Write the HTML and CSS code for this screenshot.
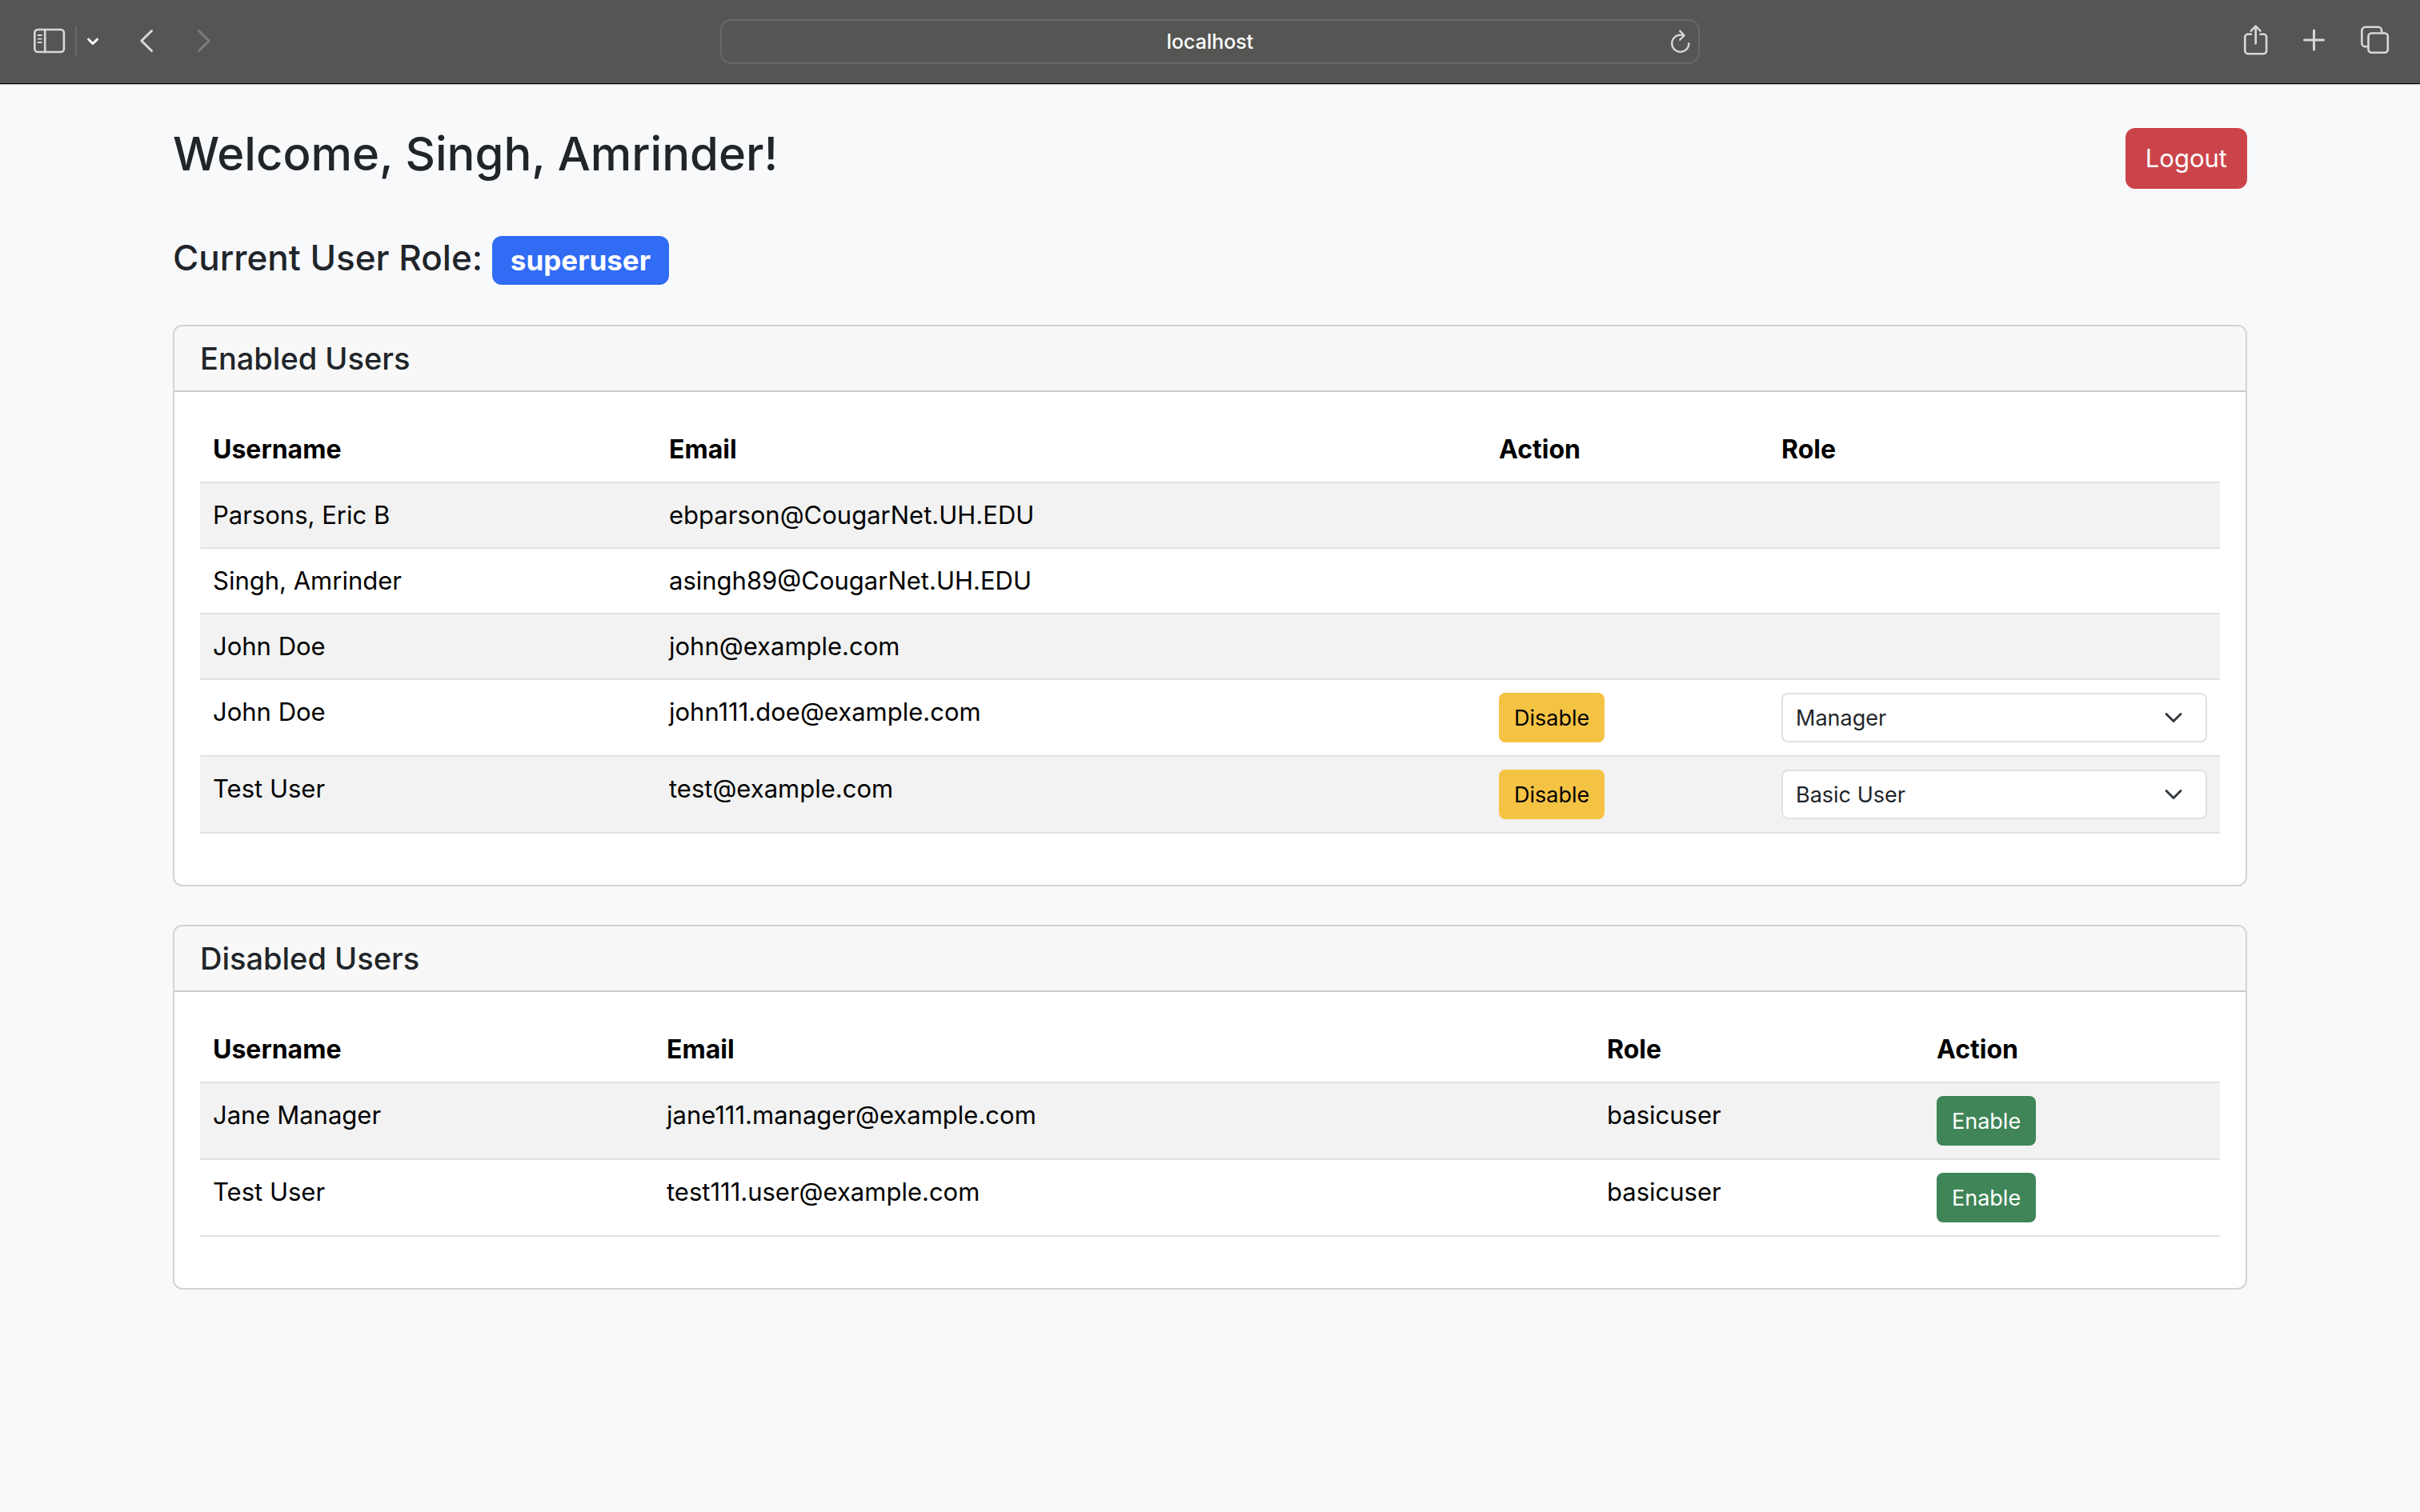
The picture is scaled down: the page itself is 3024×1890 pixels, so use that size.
FILE: index.html
```html
<!DOCTYPE html>
<html lang="en">
<head>
  <meta charset="utf-8">
  <meta name="viewport" content="width=device-width, initial-scale=1">
  <title>User Management</title>
  <link rel="stylesheet" href="styles.css">
</head>
<body>
  <header class="toolbar">
    <div class="toolbar-left">
      <button class="tool" type="button" aria-label="Show sidebar">
        <svg width="40" height="32" viewBox="0 0 40 32" fill="none" stroke="currentColor" stroke-width="2.6" stroke-linecap="round">
          <rect x="1.3" y="2" width="36.6" height="28" rx="4"/>
          <path d="M14.2 2v28"/>
          <path d="M5.6 9h4.2M5.6 13.6h4.2M5.6 18h4.2" stroke-width="1.8"/>
        </svg>
      </button>
      <span class="tool-divider"></span>
      <button class="tool tool-bright" type="button" aria-label="Tab groups">
        <svg width="16" height="32" viewBox="0 0 16 32" fill="none" stroke="currentColor" stroke-width="3" stroke-linecap="round" stroke-linejoin="round">
          <path d="M2.6 14.2l5.4 5.3 5.4-5.3"/>
        </svg>
      </button>
      <div class="tool-nav">
        <button class="tool" type="button" aria-label="Back">
          <svg width="18" height="32" viewBox="0 0 18 32" fill="none" stroke="currentColor" stroke-width="3" stroke-linecap="round" stroke-linejoin="round">
            <path d="M15.5 3.5L2.8 16l12.7 12.5"/>
          </svg>
        </button>
        <button class="tool tool-dim" type="button" aria-label="Forward">
          <svg width="18" height="32" viewBox="0 0 18 32" fill="none" stroke="currentColor" stroke-width="3" stroke-linecap="round" stroke-linejoin="round">
            <path d="M2.5 3.5L15.2 16 2.5 28.5"/>
          </svg>
        </button>
      </div>
    </div>
    <div class="address">
      <input class="address-input" type="text" value="localhost" aria-label="Address">
      <button class="tool address-reload" type="button" aria-label="Reload">
        <svg width="28" height="32" viewBox="0 0 28 32" fill="none" stroke="currentColor" stroke-width="2.3" stroke-linecap="round" stroke-linejoin="round">
          <path d="M24.4 18.2A10.6 10.6 0 1 1 13.8 7.6c1.6 0 3 .2 4.2.6"/>
          <path d="M13.2 2.6l5.4 5.6-5.4 5.6"/>
        </svg>
      </button>
    </div>
    <div class="toolbar-right">
      <button class="tool" type="button" aria-label="Share">
        <svg width="30" height="38" viewBox="0 0 30 38" fill="none" stroke="currentColor" stroke-width="2.6" stroke-linecap="round" stroke-linejoin="round">
          <path d="M10 11.8H4.8a3.5 3.5 0 0 0-3.5 3.5v17.4a3.5 3.5 0 0 0 3.5 3.5h19.8a3.5 3.5 0 0 0 3.5-3.5V15.3a3.5 3.5 0 0 0-3.5-3.5H19.4" stroke-linecap="butt"/>
          <path d="M14.7 23.5V2M8.8 7.6l5.9-5.9 5.9 5.9"/>
        </svg>
      </button>
      <button class="tool" type="button" aria-label="New tab">
        <svg width="28" height="32" viewBox="0 0 28 32" fill="none" stroke="currentColor" stroke-width="3" stroke-linecap="round">
          <path d="M13.5 4v24M1.5 16h24"/>
        </svg>
      </button>
      <button class="tool" type="button" aria-label="Show tabs">
        <svg width="36" height="36" viewBox="0 0 36 36" fill="none" stroke="currentColor" stroke-width="2.6">
          <rect x="9.5" y="9.5" width="24.3" height="24.3" rx="4"/>
          <path d="M9.5 26.3H5.8a4.5 4.5 0 0 1-4.5-4.5V6.3a4.5 4.5 0 0 1 4.5-4.5h15.8a4.5 4.5 0 0 1 4.5 4.5v3.2"/>
        </svg>
      </button>
    </div>
  </header>

  <main class="container">
    <div class="page-head">
      <h1 class="page-title">Welcome, Singh, Amrinder!</h1>
      <button class="btn btn-danger" type="button">Logout</button>
    </div>
    <h2 class="role-line">Current User Role: <span class="badge">superuser</span></h2>

    <section class="card">
      <h3 class="card-header">Enabled Users</h3>
      <div class="card-body">
        <table class="table">
          <colgroup>
            <col class="col-name">
            <col class="col-email">
            <col class="col-action">
            <col class="col-select">
          </colgroup>
          <thead>
            <tr><th scope="col">Username</th><th scope="col">Email</th><th scope="col">Action</th><th scope="col">Role</th></tr>
          </thead>
          <tbody>
            <tr><td>Parsons, Eric B</td><td>ebparson@CougarNet.UH.EDU</td><td></td><td></td></tr>
            <tr><td>Singh, Amrinder</td><td>asingh89@CougarNet.UH.EDU</td><td></td><td></td></tr>
            <tr><td>John Doe</td><td>john@example.com</td><td></td><td></td></tr>
            <tr>
              <td>John Doe</td>
              <td>john111.doe@example.com</td>
              <td><button class="btn btn-sm btn-warning" type="button">Disable</button></td>
              <td>
                <div class="select-wrap">
                  <select class="select" aria-label="Role for john111.doe@example.com">
                    <option selected>Manager</option>
                    <option>Basic User</option>
                  </select>
                  <svg class="select-arrow" width="32" height="24" viewBox="0 0 16 16" fill="none" stroke="currentColor" stroke-width="2" stroke-linecap="round" stroke-linejoin="round"><path d="m2 5 6 6 6-6"/></svg>
                </div>
              </td>
            </tr>
            <tr>
              <td>Test User</td>
              <td>test@example.com</td>
              <td><button class="btn btn-sm btn-warning" type="button">Disable</button></td>
              <td>
                <div class="select-wrap">
                  <select class="select" aria-label="Role for test@example.com">
                    <option>Manager</option>
                    <option selected>Basic User</option>
                  </select>
                  <svg class="select-arrow" width="32" height="24" viewBox="0 0 16 16" fill="none" stroke="currentColor" stroke-width="2" stroke-linecap="round" stroke-linejoin="round"><path d="m2 5 6 6 6-6"/></svg>
                </div>
              </td>
            </tr>
          </tbody>
        </table>
      </div>
    </section>

    <section class="card">
      <h3 class="card-header">Disabled Users</h3>
      <div class="card-body">
        <table class="table">
          <colgroup>
            <col class="col-name-narrow">
            <col class="col-email">
            <col class="col-role">
            <col class="col-enable">
          </colgroup>
          <thead>
            <tr><th scope="col">Username</th><th scope="col">Email</th><th scope="col">Role</th><th scope="col">Action</th></tr>
          </thead>
          <tbody>
            <tr>
              <td>Jane Manager</td>
              <td>jane111.manager@example.com</td>
              <td>basicuser</td>
              <td><button class="btn btn-sm btn-success" type="button">Enable</button></td>
            </tr>
            <tr>
              <td>Test User</td>
              <td>test111.user@example.com</td>
              <td>basicuser</td>
              <td><button class="btn btn-sm btn-success" type="button">Enable</button></td>
            </tr>
          </tbody>
        </table>
      </div>
    </section>
  </main>
</body>
</html>
```
FILE: styles.css
```css
*,
*::before,
*::after {
  box-sizing: border-box;
}

body {
  margin: 0;
  background: #f8f9fb;
  color: #212529;
  font-family: Inter, "Liberation Sans", sans-serif;
  font-size: 31px;
  line-height: 48px;
}

button,
input,
select {
  margin: 0;
  font-family: inherit;
}

/* Browser toolbar */
.toolbar {
  display: grid;
  grid-template-columns: 1fr minmax(0, 1224px) 1fr;
  align-items: center;
  height: 106px;
  padding: 0 38px 1px;
  background: #555553;
  border-bottom: 1px solid #b9babb;
  box-shadow: inset 0 -1px 0 #000;
}

.toolbar-left,
.toolbar-right,
.tool-nav {
  display: flex;
  align-items: center;
}

.toolbar-left {
  gap: 12px;
  padding: 0 0 2px 4px;
}

.toolbar-right {
  justify-content: flex-end;
  gap: 44px;
  padding-bottom: 4px;
}

.tool-nav {
  gap: 54px;
  margin-left: 38px;
}

.tool {
  display: flex;
  padding: 0;
  border: 0;
  background: none;
  color: #d8d8d7;
}

.tool-bright {
  color: #fff;
}

.tool-dim {
  color: #7c7c7a;
}

.tool-divider {
  width: 2px;
  height: 36px;
  background: #6a6a68;
}

.address {
  position: relative;
}

.address-input {
  display: block;
  width: 100%;
  height: 56px;
  padding: 0 56px;
  border: 2px solid #686866;
  border-radius: 14px;
  background: transparent;
  color: #fff;
  font-size: 25px;
  font-weight: 500;
  text-align: center;
}

.address-reload {
  position: absolute;
  top: 12px;
  right: 10px;
}

/* Page */
.container {
  max-width: 2640px;
  margin: 0 auto;
  padding: 46px 24px 0;
}

.page-head {
  display: flex;
  align-items: center;
  justify-content: space-between;
  margin-bottom: 48px;
}

.page-title {
  margin: 0 0 12px;
  font-size: 58px;
  font-weight: 500;
  line-height: 80px;
}

.role-line {
  margin: 0 0 50px;
  font-size: 44px;
  font-weight: 500;
  line-height: 60px;
}

.badge {
  display: inline-block;
  padding: 12px 23px 13px;
  border-radius: 12px;
  background: #316cf4;
  color: #fff;
  font-size: 35px;
  font-weight: 700;
  line-height: 36px;
}

.btn {
  display: inline-block;
  padding: 12px 23px;
  border: 2px solid transparent;
  border-radius: 12px;
  font-size: 31px;
  line-height: 48px;
}

.btn-sm {
  display: block;
  padding: 9px 17px 7px;
  border-radius: 8px;
  font-size: 27px;
  line-height: 42px;
}

.btn-danger {
  background: #cb444a;
  color: #fff;
}

.btn-warning {
  background: #f5c344;
  color: #000;
}

.btn-success {
  background: #408558;
  color: #fff;
}

.card {
  margin-bottom: 48px;
  border: 2px solid #d2d3d4;
  border-radius: 12px;
  background: #fff;
  overflow: hidden;
}

.card-header {
  margin: 0;
  padding: 16px 32px;
  border-bottom: 2px solid #cbcbcb;
  background: #f8f8f8;
  font-size: 38px;
  font-weight: 500;
  line-height: 48px;
}

.card-body {
  padding: 32px;
}

.table {
  width: 100%;
  margin-bottom: 32px;
  border-spacing: 0;
  table-layout: fixed;
  color: #000;
}

.table th,
.table td {
  padding: 16px;
  border-bottom: 2px solid #dee2e6;
  text-align: left;
  vertical-align: top;
}

.table th {
  font-size: 32px;
  font-weight: 700;
}

.table tbody tr:nth-child(odd) {
  background: #f2f2f2;
}

.col-name {
  width: 570px;
}

.col-name-narrow {
  width: 567px;
}

.col-action {
  width: 353px;
}

.col-select {
  width: 564px;
}

.col-role {
  width: 412px;
}

.col-enable {
  width: 370px;
}

.select-wrap {
  position: relative;
}

.select {
  display: block;
  width: 100%;
  height: 62px;
  padding: 9px 72px 7px 16px;
  border: 2px solid #dee2e6;
  border-radius: 8px;
  background: #fff;
  color: #212529;
  font-size: 27px;
  line-height: 42px;
  appearance: none;
}

.select-arrow {
  position: absolute;
  top: 19px;
  right: 26px;
  color: #343a40;
  pointer-events: none;
}
```
